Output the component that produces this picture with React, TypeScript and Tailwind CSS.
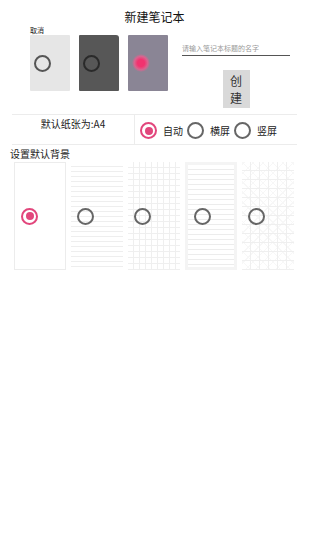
import React from 'react';

const font = { fontFamily: '"Noto Sans CJK SC", "Noto Sans", sans-serif' };

function Radio({ checked }: { checked?: boolean }) {
  if (checked) {
    return (
      <span className="flex h-[17px] w-[17px] shrink-0 items-center justify-center rounded-full border-[2px] border-[#e2467c] bg-white">
        <span className="h-[8px] w-[8px] rounded-full bg-[#e2467c]" />
      </span>
    );
  }
  return <span className="block h-[17px] w-[17px] shrink-0 rounded-full border-[2px] border-[#666666] bg-transparent" />;
}

const covers = [
  { bg: 'bg-[#e6e6e6]', kind: 'ring-light' },
  { bg: 'bg-[#575757]', kind: 'ring-dark' },
  { bg: 'bg-[#8a8595]', kind: 'glow' },
];

const papers = [
  'bg-white border border-[#ececec]',
  'bg-white bg-[repeating-linear-gradient(to_bottom,transparent_0,transparent_4px,#eeeeee_4px,#eeeeee_5px)]',
  'bg-white bg-[repeating-linear-gradient(to_bottom,transparent_0,transparent_5px,#efefef_5px,#efefef_6px),repeating-linear-gradient(to_right,transparent_0,transparent_5px,#efefef_5px,#efefef_6px)]',
  'bg-white border-[3px] border-[#f4f4f4] bg-[repeating-linear-gradient(to_bottom,transparent_0,transparent_4px,#ececec_4px,#ececec_5px)]',
  'bg-white bg-[repeating-linear-gradient(to_bottom,transparent_0,transparent_8px,#efefef_8px,#efefef_9px),repeating-linear-gradient(to_right,transparent_0,transparent_8px,#efefef_8px,#efefef_9px),repeating-linear-gradient(45deg,transparent_0,transparent_6px,#f7f7f7_6px,#f7f7f7_7px),repeating-linear-gradient(-45deg,transparent_0,transparent_6px,#f7f7f7_6px,#f7f7f7_7px)]',
];

export default function App() {
  return (
    <div className="h-[550px] w-[309px] bg-white text-[#222]" style={font}>
      <h1 className="pt-[9px] text-center text-[12px] leading-[16px] text-[#111]">新建笔记本</h1>

      <div className="flex">
        <div className="pl-[30px]">
          <div className="text-[7px] leading-[10px] text-[#222]">取消</div>
          <div className="flex gap-[9px]">
            {covers.map((c, i) => (
              <div key={i} className={`flex h-[56px] w-[40px] items-center pl-[4px] ${c.bg} ${i === 1 ? 'rounded-tr-[3px]' : ''} rounded-[1px]`}>
                {c.kind === 'glow' ? (
                  <span className="h-[18px] w-[18px] rounded-full bg-[radial-gradient(circle,#f2336f_0,#f2336f_28%,#d9648f_52%,transparent_72%)]" />
                ) : (
                  <span className={`block h-[17px] w-[17px] rounded-full border-[2px] ${c.kind === 'ring-light' ? 'border-[#555]' : 'border-[#2a2a2a]'}`} />
                )}
              </div>
            ))}
          </div>
        </div>

        <div className="ml-[14px] w-[108px] pt-[18px]">
          <div className="border-b border-[#555] pb-[2px] text-[7px] leading-[10px] text-[#9a9a9a]">请输入笔记本标题的名字</div>
          <div className="mt-[14px] flex justify-center">
            <button className="flex h-[38px] w-[27px] flex-col items-center justify-center bg-[#d9d9d9] text-[12px] leading-[17px] text-[#333]">
              <span className="block">创</span>
              <span className="block">建</span>
            </button>
          </div>
        </div>
      </div>

      <div className="mx-[12px] mt-[6px] flex h-[31px] border-y border-[#ececec]">
        <div className="w-[122px] pt-[2px] text-center text-[10px] leading-[13px] text-[#222]">默认纸张为:A4</div>
        <div className="flex items-center border-l border-[#ececec] pl-[5px] pt-[2px] text-[10px]">
          <Radio checked />
          <span className="ml-[6px] mr-[4px]">自动</span>
          <Radio />
          <span className="ml-[6px] mr-[4px]">横屏</span>
          <Radio />
          <span className="ml-[6px]">竖屏</span>
        </div>
      </div>

      <div className="pl-[10px] pt-[3px] text-[10px] leading-[12px] text-[#222]">设置默认背景</div>

      <div className="ml-[14px] mt-[2px] flex gap-[5px]">
        {papers.map((p, i) => (
          <div key={i} className={`flex h-[108px] w-[52px] items-center pl-[6px] ${p}`}>
            <Radio checked={i === 0} />
          </div>
        ))}
      </div>
    </div>
  );
}
